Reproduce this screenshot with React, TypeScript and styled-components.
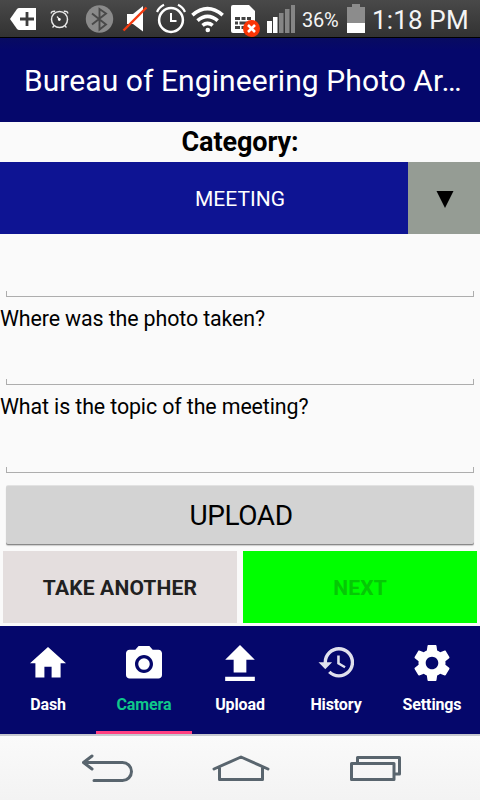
import React from 'react';
import styled, { createGlobalStyle } from 'styled-components';

const GlobalStyle = createGlobalStyle`
  * { box-sizing: border-box; }
  body { margin: 0; background: #fafafa; font-family: Roboto, sans-serif; }
`;

const Screen = styled.main`
  width: 480px;
  height: 800px;
  display: flex;
  flex-direction: column;
  overflow: hidden;
  background: #fafafa;
  color: #000;
`;

const StatusBar = styled.div`
  height: 38px;
  flex: none;
  display: flex;
  align-items: flex-start;
  background: linear-gradient(#494949, #323232);
  border-bottom: 1px solid #000;
`;

const StatusIcon = styled.svg<{ $gap: number }>`
  flex: none;
  height: 37px;
  margin-left: ${(p) => p.$gap}px;
`;

const StatusText = styled.span<{ $size: number; $gap: number; $width: number; $spacing?: number }>`
  flex: none;
  width: ${(p) => p.$width}px;
  margin-left: ${(p) => p.$gap}px;
  padding-top: 1px;
  font-size: ${(p) => p.$size}px;
  line-height: 38px;
  letter-spacing: ${(p) => p.$spacing ?? 0}px;
  white-space: nowrap;
  color: #f4f4f4;
`;

const AppBar = styled.header`
  height: 84px;
  flex: none;
  padding: 0 16px 0 24px;
  background: linear-gradient(#080b61, #05076b 12px);
`;

const Title = styled.h1`
  margin: 0;
  font-size: 30px;
  font-weight: 400;
  line-height: 85px;
  letter-spacing: 0.07px;
  white-space: nowrap;
  color: #fff;
`;

const CategoryLabel = styled.h2`
  height: 40px;
  flex: none;
  margin: 0;
  font-size: 27px;
  font-weight: 700;
  line-height: 40px;
  letter-spacing: -0.1px;
  text-align: center;
`;

const Picker = styled.div`
  height: 72px;
  flex: none;
  display: grid;
  grid-template-columns: 408px 72px;
`;

const PickerValue = styled.button`
  border: 0;
  padding: 1px 0 0 72px;
  background: #0e1493;
  color: #fff;
  font: 400 21px Roboto, sans-serif;
`;

const PickerArrow = styled.button`
  display: flex;
  align-items: center;
  justify-content: center;
  border: 0;
  padding: 2px 0 0 1px;
  background: #959c94;
`;

const Field = styled.div<{ $height: number }>`
  height: ${(p) => p.$height}px;
  flex: none;
  display: flex;
  flex-direction: column;
`;

const Question = styled.label`
  font-size: 21.4px;
  line-height: 27px;
  letter-spacing: -0.12px;
  padding-top: 8px;
  white-space: nowrap;
`;

const Underline = styled.div`
  height: 6px;
  margin: auto 6px 0;
  border: 1px solid #adadad;
  border-top: 0;
`;

const UploadButton = styled.button`
  height: 59px;
  flex: none;
  margin: 13px 6px 0;
  padding: 0 0 0 2px;
  border: 0;
  border-radius: 2px;
  background: #d3d3d3;
  box-shadow: inset 0 -1px #888, 0 -1px #e2e2e2, 0 1px 1px #ccc;
  color: #000;
  font: 400 28px Roboto, sans-serif;
  letter-spacing: -0.4px;
`;

const Actions = styled.div`
  display: grid;
  flex: none;
  grid-template-columns: 1fr 1fr;
  gap: 6px;
  height: 72px;
  margin: 6px 3px 3px;
`;

const ActionButton = styled.button<{ $bg: string; $color: string }>`
  border: 0;
  padding: 2px 0 0;
  background: ${(p) => p.$bg};
  color: ${(p) => p.$color};
  font: 700 21px Roboto, sans-serif;
  letter-spacing: 0.18px;
`;

const TabBar = styled.nav`
  height: 108px;
  flex: none;
  display: grid;
  grid-template-columns: repeat(5, 96px);
  background: #05076b;
`;

const Tab = styled.div<{ $active?: boolean }>`
  display: flex;
  flex-direction: column;
  align-items: center;
  padding-top: 19px;
  border-bottom: 3px solid ${(p) => (p.$active ? '#ff4081' : 'transparent')};
  color: ${(p) => (p.$active ? '#0fc78a' : '#fff')};
`;

const TabIcon = styled.svg<{ $opacity?: number }>`
  width: 36px;
  height: 36px;
  fill: #fff;
  opacity: ${(p) => p.$opacity ?? 1};
`;

const TabLabel = styled.span`
  margin-top: 14px;
  font-size: 16px;
  font-weight: 700;
  line-height: 20px;
  letter-spacing: -0.13px;
`;

const SystemNav = styled.div`
  flex: 1;
  display: flex;
  align-items: flex-start;
  border-top: 2px solid #c6c8ce;
  background: linear-gradient(#fafafa, #f3f3f3);
`;

const NavIcon = styled.svg<{ $gap: number }>`
  flex: none;
  height: 64px;
  margin-left: ${(p) => p.$gap}px;
  fill: none;
  stroke: #59656e;
  stroke-width: 3;
  stroke-linecap: round;
  stroke-linejoin: round;
`;

const tabs = [
  { label: 'Dash', box: '2 1.9 20 20', d: 'M10 20v-6h4v6h5v-8h3L12 3 2 12h3v8z' },
  {
    label: 'Camera',
    box: '2 1.4 20 20',
    active: true,
    d: 'M12 8.8a3.2 3.2 0 1 0 0 6.4 3.2 3.2 0 0 0 0-6.4zM9 2L7.17 4H4c-1.1 0-2 .9-2 2v12c0 1.1.9 2 2 2h16c1.1 0 2-.9 2-2V6c0-1.1-.9-2-2-2h-3.17L15 2H9zm3 15c-2.76 0-5-2.24-5-5s2.24-5 5-5 5 2.24 5 5-2.24 5-5 5z',
  },
  { label: 'Upload', box: '3.5 3 17 17', d: 'M9 16h6v-6h4l-7-7-7 7h4zm-4 2h14v2H5z' },
  {
    label: 'History',
    box: '0.7 1.8 21.2 21.2',
    opacity: 0.88,
    d: 'M13 3c-4.97 0-9 4.03-9 9H1l3.89 3.89.07.14L9 12H6c0-3.87 3.13-7 7-7s7 3.13 7 7-3.13 7-7 7c-1.93 0-3.68-.79-4.94-2.06l-1.42 1.42C8.27 19.99 10.51 21 13 21c4.97 0 9-4.03 9-9s-4.03-9-9-9zm-1 5v5l4.28 2.54.72-1.21-3.5-2.08V8H12z',
  },
  {
    label: 'Settings',
    box: '2 2 20 20',
    d: 'M19.43 12.98c.04-.32.07-.64.07-.98s-.03-.66-.07-.98l2.11-1.65c.19-.15.24-.42.12-.64l-2-3.46c-.12-.22-.39-.3-.61-.22l-2.49 1c-.52-.4-1.08-.73-1.69-.98l-.38-2.65C14.46 2.18 14.25 2 14 2h-4c-.25 0-.46.18-.49.42l-.38 2.65c-.61.25-1.17.59-1.69.98l-2.49-1c-.23-.09-.49 0-.61.22l-2 3.46c-.13.22-.07.49.12.64l2.11 1.65c-.04.32-.07.65-.07.98s.03.66.07.98l-2.11 1.65c-.19.15-.24.42-.12.64l2 3.46c.12.22.39.3.61.22l2.49-1c.52.4 1.08.73 1.69.98l.38 2.65c.03.24.24.42.49.42h4c.25 0 .46-.18.49-.42l.38-2.65c.61-.25 1.17-.59 1.69-.98l2.49 1c.23.09.49 0 .61-.22l2-3.46c.12-.22.07-.49-.12-.64l-2.11-1.65zM12 15.5c-1.93 0-3.5-1.57-3.5-3.5s1.57-3.5 3.5-3.5 3.5 1.57 3.5 3.5-1.57 3.5-3.5 3.5z',
  },
];

function StatusIcons() {
  return (
    <>
      <StatusIcon $gap={10} width={26} viewBox="10 0 26 37">
        <path d="M10 19l7-10q1-1 2-1h17v22H19q-1 0-2-1z" fill="#fff" />
        <path d="M20 19h14M27 12v14" stroke="#3e3e3e" strokeWidth="2.8" />
      </StatusIcon>
      <StatusIcon $gap={14} width={20} viewBox="50 0 20 37" fill="none" stroke="#e8e8e8">
        <circle cx="59.5" cy="19.5" r="8" strokeWidth="1.5" />
        <path d="M51.2 13.500q0-2.500 4-2.200M67.800 13.500q0-2.500-4-2.200M54 26l-1.500 1.500M65 26l1.500 1.500" strokeWidth="1.400" />
        <path d="M57 16.5l2.500 3" strokeWidth="1.200" />
        <circle cx="59.3" cy="19.5" r="1.400" fill="#fff" stroke="none" />
      </StatusIcon>
      <StatusIcon $gap={15} width={29} viewBox="85 0 29 37" fill="none">
        <circle cx="99.5" cy="19" r="13.7" fill="#8a8a8a" />
        <path d="M92 13.5l14 11-6.500 5V9l6.500 4.500-14 11" stroke="#494949" strokeWidth="1.9" />
      </StatusIcon>
      <StatusIcon $gap={8} width={26} viewBox="122 0 26 37">
        <path d="M127 14h6l10-8v25.500L133 24h-6z" fill="#fff" />
        <path d="M123.500 30.500L146.500 7.500" stroke="#f43b10" strokeWidth="2.400" />
      </StatusIcon>
      <StatusIcon $gap={8} width={30} viewBox="156 0 30 37" fill="none" stroke="#fff">
        <circle cx="171" cy="20" r="11.9" strokeWidth="2.500" />
        <path d="M157 12q2-5 7-7.300M185 12q-2-5-7-7.300" strokeWidth="2.300" />
        <path d="M171 13v8h5.500" strokeWidth="2" />
      </StatusIcon>
      <StatusIcon $gap={5} width={34} viewBox="191 0 34 37" fill="none" stroke="#fff" strokeWidth="3.7">
        <path d="M192.400 15.200q15.100-13 30.300 0M197.500 20.600q10-8.500 20.200 0M202.500 25.400q5-4 10.200 0" />
        <circle cx="207.8" cy="30" r="2.300" fill="#fff" stroke="none" />
      </StatusIcon>
      <StatusIcon $gap={5} width={30} viewBox="230 0 30 37">
        <path d="M233 5h16l6 6v20q0 2-2 2h-20q-2 0-2-2V7q0-2 2-2z" fill="#fff" />
        <path d="M235 17h5v3h-5zM241.500 17h4v3h-4zM247 17h4v3h-4zM235 21.500h3v3h-3zM239.500 21.500h8v3h-8zM235 26h5v3h-5zM241.500 26h4v3h-4z" fill="#424242" />
        <circle cx="251.5" cy="28.5" r="8.5" fill="#fa3505" />
        <path d="M248 25l7 7M255 25l-7 7" stroke="#fff" strokeWidth="2.600" />
      </StatusIcon>
      <StatusIcon $gap={7} width={29} viewBox="267 0 29 37">
        <path d="M267 21h5v12h-5zM273 17h4.500v16H273z" fill="#fff" />
        <path d="M279 13h4.500v20H279zM285 9h4.500v24H285zM291 5h4v28h-4z" fill="#858585" />
      </StatusIcon>
    </>
  );
}

export default function App() {
  return (
    <Screen>
      <GlobalStyle />
      <StatusBar>
        <StatusIcons />
        <StatusText $size={20} $gap={6} $width={38} $spacing={-0.3}>36%</StatusText>
        <StatusIcon $gap={7} width={18} viewBox="347 0 18 37">
          <path d="M347 7h5V4h8v3h5v16h-18z" fill="#8c8c8c" />
          <path d="M347 23h18v10h-18z" fill="#fff" />
        </StatusIcon>
        <StatusText $size={26} $gap={7} $width={106} $spacing={0.15}>1:18 PM</StatusText>
      </StatusBar>
      <AppBar>
        <Title>Bureau of Engineering Photo Ar…</Title>
      </AppBar>
      <CategoryLabel>Category:</CategoryLabel>
      <Picker>
        <PickerValue>MEETING</PickerValue>
        <PickerArrow aria-label="Choose category">
          <svg width="18" height="17" viewBox="0 0 18 17"><path d="M.5 0h17L9 17z" /></svg>
        </PickerArrow>
      </Picker>
      <Field $height={63}><Underline /></Field>
      <Field $height={88}>
        <Question>Where was the photo taken?</Question>
        <Underline />
      </Field>
      <Field $height={88}>
        <Question>What is the topic of the meeting?</Question>
        <Underline />
      </Field>
      <UploadButton>UPLOAD</UploadButton>
      <Actions>
        <ActionButton $bg="#e4dede" $color="#212121">TAKE ANOTHER</ActionButton>
        <ActionButton $bg="#00ff00" $color="#05c805">NEXT</ActionButton>
      </Actions>
      <TabBar>
        {tabs.map((tab) => (
          <Tab key={tab.label} $active={tab.active}>
            <TabIcon viewBox={tab.box} $opacity={tab.opacity}><path d={tab.d} /></TabIcon>
            <TabLabel>{tab.label}</TabLabel>
          </Tab>
        ))}
      </TabBar>
      <SystemNav>
        <NavIcon $gap={80} width={56} viewBox="80 736 56 64">
          <path d="M92 756l-8.500 6.500 8.500 6.500M84 762.500h38.500a9 9 0 0 1 0 18H94" />
        </NavIcon>
        <NavIcon $gap={75} width={60} viewBox="211 736 60 64">
          <path d="M214 769l27-12 27 12M219.500 768v11.500h43V768" />
        </NavIcon>
        <NavIcon $gap={78} width={54} viewBox="349 736 54 64">
          <path d="M351.500 763.500h42.500v16h-42.500zM357.500 763v-5.500h42v16.500H395" />
        </NavIcon>
      </SystemNav>
    </Screen>
  );
}
